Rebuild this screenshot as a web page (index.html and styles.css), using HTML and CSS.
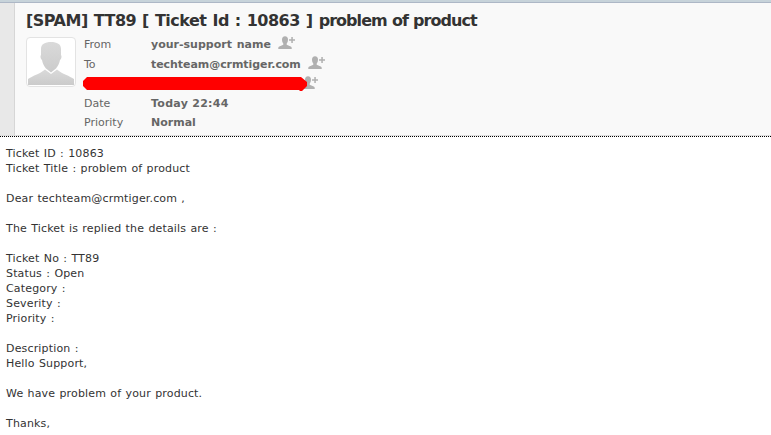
FILE: index.html
```
<!DOCTYPE html>
<html lang="en">
<head>
  <meta charset="UTF-8">
  <title>[SPAM] TT89 [ Ticket Id : 10863 ] problem of product</title>
  <link rel="stylesheet" href="styles.css">
</head>
<body>
  <!-- shared icons -->
  <svg class="sprite" width="0" height="0">
    <symbol id="add-contact" viewBox="0 0 18 14">
      <path d="M7 0.2c2 0 3 1.3 3 3.3 0 2-.6 3.200-1.300 4v1.300l4 1.600c.7.3 1 .8 1 1.500V13H.3v-1.100c0-.7.3-1.200 1-1.500l4-1.600V7.500C4.600 6.700 4 5.500 4 3.500 4 1.500 5 .2 7 .2z"/>
      <path d="M13.300 1h1.500v2.200H17v1.500h-2.200V7h-1.500V4.700H11V3.200h2.300z"/>
    </symbol>
  </svg>

  <div class="header">
    <div class="gutter"></div>
    <div class="header-main">
      <h1 class="subject">[SPAM] TT89 [ Ticket Id : 10863 ] <span class="title">problem of product</span></h1>
      <div class="header-content">
        <div class="avatar">
          <svg width="46" height="43" viewBox="0 0 46 43">
            <defs>
              <linearGradient id="shade" x1="0" y1="0" x2="0" y2="1">
                <stop offset="0" stop-color="#dadada"/>
                <stop offset="1" stop-color="#cbcbcb"/>
              </linearGradient>
            </defs>
            <path fill="url(#shade)" d="M0 43v-6c4-3 12-5 17-9.500l6 4.500 6-4.500c5 4.500 13 6.500 17 9.500v6z"/>
            <path fill="url(#shade)" d="M23 0c6 0 10 2 10 7v6c1 1 .5 4-1 5-1 5-3 7-4 8.500L23 30.500l-5-4c-1-1.500-3-3.500-4-8.500-1.500-1-2-4-1-5V7c0-5 4-7 10-7z"/>
          </svg>
        </div>
        <div class="fields">
          <div class="field">
            <span class="label">From</span>
            <span class="value spaced">your-support name</span>
            <svg class="add" width="18" height="14"><use href="#add-contact"/></svg>
          </div>
          <div class="field">
            <span class="label">To</span>
            <span class="value email">techteam@crmtiger.com</span>
            <svg class="add" width="18" height="14"><use href="#add-contact"/></svg>
          </div>
          <div class="field redacted">
            <svg class="add" width="18" height="14"><use href="#add-contact"/></svg>
            <svg class="marker" width="225" height="14" viewBox="0 0 225 14">
              <path d="M4 0h214l6 5v4l-5 5h-2l-1-1H4L0 9V4z"/>
            </svg>
          </div>
          <div class="field">
            <span class="label">Date</span>
            <span class="value date">Today 22:44</span>
          </div>
          <div class="field">
            <span class="label">Priority</span>
            <span class="value">Normal</span>
          </div>
        </div>
      </div>
    </div>
  </div>

  <div class="message">Ticket ID : 10863
Ticket Title : problem of product

Dear techteam@crmtiger.com ,

The Ticket is replied the details are :

Ticket No : TT89
Status : Open
Category :
Severity :
Priority :

Description :
Hello Support,

We have problem of your product.

Thanks,</div>
</body>
</html>
```
FILE: styles.css
```
* {
  box-sizing: border-box;
}
body {
  margin: 0;
  background: #fff;
  color: #333;
  font-family: "DejaVu Sans", Verdana, sans-serif;
  font-size: 11px;
  overflow: hidden;
}
.sprite {
  display: block;
}
.header {
  display: flex;
  height: 137px;
  background: #f9f9f9;
  border-top: 2px solid #c7d3da;
  border-bottom: 1px dotted #000;
  box-shadow: inset 0 1px #adb7c6, inset 0 -1px #ddd;
}
.gutter {
  width: 15px;
  margin: 1px 0;
  background: #e8e8e8;
  border-right: 1px solid #d6d6d6;
}
.header-main {
  flex: 1;
  padding: 9px 0 0 11px;
}
.subject {
  margin: 0;
  font-size: 16px;
  line-height: 20px;
  letter-spacing: -0.5px;
  word-spacing: 0.9px;
  white-space: nowrap;
}
.subject .title {
  letter-spacing: -0.95px;
  word-spacing: 0.5px;
}
.header-content {
  display: flex;
  gap: 8px;
  padding-top: 3px;
}
.avatar {
  width: 50px;
  height: 50px;
  margin-top: 3px;
  padding: 4px 1px 1px;
  background: #fff;
  border: 1px solid #e3e3e3;
  border-radius: 4px;
}
.avatar svg {
  display: block;
}
.fields {
  display: grid;
  grid-template-rows: 20px 20px 20px 19px 19px;
}
.field {
  display: flex;
  align-items: center;
  color: #666;
}
.label {
  width: 67px;
}
.value {
  font-weight: bold;
}
.spaced {
  word-spacing: 1px;
}
.email {
  letter-spacing: -0.06px;
}
.date {
  letter-spacing: 0.28px;
}
.add {
  margin: -2px 0 0 7px;
  fill: #b0b0b0;
}
.redacted {
  position: relative;
}
.redacted .add {
  margin-left: 217px;
}
.marker {
  position: absolute;
  left: -1px;
  top: 3px;
  fill: #f00;
}
.message {
  padding: 9px 6px;
  line-height: 15px;
  letter-spacing: 0.16px;
  word-spacing: 0.6px;
  white-space: pre-wrap;
}
```
